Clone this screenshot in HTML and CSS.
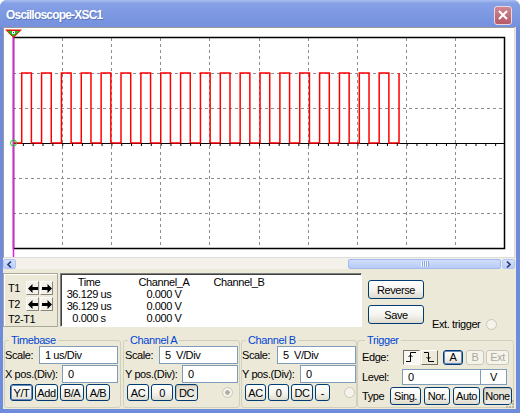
FILE: index.html
```html
<!DOCTYPE html>
<html lang="en">
<head>
  <meta charset="UTF-8">
  <title>Oscilloscope-XSC1</title>
  <link rel="stylesheet" href="styles.css">
</head>
<body>
  <div class="window">
    <div class="titlebar">
      <span class="title">Oscilloscope-XSC1</span>
      <span class="close">
        <svg width="10" height="10" viewBox="0 0 10 10"><path d="M1 1L9 9M9 1L1 9" stroke="#fff" stroke-width="2"/></svg>
      </span>
    </div>

    <div class="client">
      <div class="screen">
        <svg width="510" height="229" viewBox="0 0 510 229">
          <g stroke="#8c8c8c" stroke-dasharray="3 3" fill="none">
            <path d="M58.5 10V220M107.5 10V220M156.5 10V220M205.5 10V220M255.5 10V220M304.5 10V220M353.5 10V220M402.5 10V220M451.5 10V220"/>
            <path d="M9 45.5H501M9 80.5H501M9 150.5H501M9 185.5H501"/>
          </g>
          <path d="M9 115.5H501" stroke="#000"/>
          <path fill="none" stroke="#ff0000" stroke-width="1.5"
            d="M9 115H17.7
               V45h9.7V115h10.16 V45h9.7V115h10.16 V45h9.7V115h10.16 V45h9.7V115h10.16 V45h9.7V115h10.16
               V45h9.7V115h10.16 V45h9.7V115h10.16 V45h9.7V115h10.16 V45h9.7V115h10.16 V45h9.7V115h10.16
               V45h9.7V115h10.16 V45h9.7V115h10.16 V45h9.7V115h10.16 V45h9.7V115h10.16 V45h9.7V115h10.16
               V45h9.7V115h10.16 V45h9.7V115h10.16 V45h9.7V115h10.16 V45h9.7V115h10.16
               V45"/>
          <path d="M9 116.5H501" stroke="#000" stroke-width="3" stroke-dasharray="1 8.84"/>
          <rect x="9.5" y="9.5" width="491" height="211" fill="none" stroke="#000" stroke-width="1.5"/>
          <path d="M9.5 9V229" stroke="#e020e0" stroke-width="1.5"/>
          <circle cx="9.5" cy="115" r="3" fill="none" stroke="#10d010"/>
          <polygon points="1,1.5 18,1.5 9.5,10" fill="#e81010"/>
          <polygon points="3.5,3 15.5,3 9.5,8.5" fill="#10c810"/>
          <rect x="8" y="3" width="3" height="3" fill="#fff"/>
          <rect x="9" y="4" width="1" height="1" fill="#2040d0"/>
        </svg>
      </div>

      <div class="hscroll">
        <span class="sb-btn">
          <svg width="5" height="7" viewBox="0 0 5 7"><path d="M4 0.5L1 3.5L4 6.5" fill="none" stroke="#2c3f73" stroke-width="1.6"/></svg>
        </span>
        <span class="sb-track">
          <span class="sb-thumb">
            <svg width="8" height="6" viewBox="0 0 8 6"><path d="M0.5 0V6M2.5 0V6M4.5 0V6M6.5 0V6" stroke="#eef3ff"/><path d="M1.5 0V6M3.5 0V6M5.5 0V6M7.5 0V6" stroke="#8fa8e0"/></svg>
          </span>
        </span>
        <span class="sb-btn">
          <svg width="5" height="7" viewBox="0 0 5 7"><path d="M1 0.5L4 3.5L1 6.5" fill="none" stroke="#2c3f73" stroke-width="1.6"/></svg>
        </span>
      </div>

      <div class="controls">
        <div class="top-row">
          <div class="cursors">
            <div class="cur-line">
              <span class="cur-name">T1</span>
              <span class="arrow"><svg width="10" height="9" viewBox="0 0 10 9"><path d="M0 4.5L4.5 0V3H10V6H4.5V9Z"/></svg></span>
              <span class="arrow"><svg width="10" height="9" viewBox="0 0 10 9"><path d="M10 4.5L5.5 0V3H0V6H5.5V9Z"/></svg></span>
            </div>
            <div class="cur-line">
              <span class="cur-name">T2</span>
              <span class="arrow"><svg width="10" height="9" viewBox="0 0 10 9"><path d="M0 4.5L4.5 0V3H10V6H4.5V9Z"/></svg></span>
              <span class="arrow"><svg width="10" height="9" viewBox="0 0 10 9"><path d="M10 4.5L5.5 0V3H0V6H5.5V9Z"/></svg></span>
            </div>
            <div class="cur-diff">T2-T1</div>
          </div>

          <div class="readout">
            <span>Time</span><span>Channel_A</span><span>Channel_B</span>
            <span>36.129 us</span><span>0.000 V</span><span></span>
            <span>36.129 us</span><span>0.000 V</span><span></span>
            <span>0.000 s</span><span>0.000 V</span><span></span>
          </div>

          <div class="actions">
            <button class="btn btn-lg">Reverse</button>
            <button class="btn btn-lg">Save</button>
          </div>

          <div class="ext">Ext. trigger <span class="radio"></span></div>
        </div>

        <div class="groups">
          <fieldset class="grp tb">
            <legend>Timebase</legend>
            <div class="row">
              <label class="lbl">Scale:</label>
              <input class="field w79" value="1 us/Div" readonly>
            </div>
            <div class="row">
              <label class="lbl">X pos.(Div):</label>
              <input class="field w56" value="0" readonly>
            </div>
            <div class="row btns">
              <button class="btn def b23">Y/T</button>
              <button class="btn b23">Add</button>
              <button class="btn b24">B/A</button>
              <button class="btn b24">A/B</button>
            </div>
          </fieldset>

          <fieldset class="grp cha">
            <legend>Channel A</legend>
            <div class="row">
              <label class="lbl">Scale:</label>
              <input class="field w79" value="5  V/Div" readonly>
            </div>
            <div class="row">
              <label class="lbl">Y pos.(Div):</label>
              <input class="field w56" value="0" readonly>
            </div>
            <div class="row btns">
              <button class="btn b22">AC</button>
              <button class="btn b22">0</button>
              <button class="btn on b23">DC</button>
              <span class="radio dot"></span>
            </div>
          </fieldset>

          <fieldset class="grp chb">
            <legend>Channel B</legend>
            <div class="row">
              <label class="lbl">Scale:</label>
              <input class="field w79" value="5  V/Div" readonly>
            </div>
            <div class="row">
              <label class="lbl">Y pos.(Div):</label>
              <input class="field w56" value="0" readonly>
            </div>
            <div class="row btns">
              <button class="btn b21">AC</button>
              <button class="btn b21">0</button>
              <button class="btn b22">DC</button>
              <button class="btn b15">-</button>
              <span class="radio"></span>
            </div>
          </fieldset>

          <fieldset class="grp trig">
            <legend>Trigger</legend>
            <div class="row edge-row">
              <label class="lbl-edge">Edge:</label>
              <span class="edge down">
                <svg width="11" height="10" viewBox="0 0 11 10"><path d="M0 9.5H4.5V0.5H10M2.5 5L4.5 3L6.5 5" fill="none" stroke="#000"/></svg>
              </span>
              <span class="edge">
                <svg width="11" height="10" viewBox="0 0 11 10"><path d="M0 0.5H4.5V9.5H10M2.5 5L4.5 7L6.5 5" fill="none" stroke="#000"/></svg>
              </span>
              <button class="btn def src-a">A</button>
              <button class="btn src-b" disabled>B</button>
              <button class="btn src-ext" disabled>Ext</button>
            </div>
            <div class="row level-row">
              <label class="lbl-level">Level:</label>
              <input class="field w79 short" value="0" readonly>
              <span class="unit">V</span>
            </div>
            <div class="row type-row">
              <label class="lbl-type">Type</label>
              <button class="btn b31">Sing.</button>
              <button class="btn b26">Nor.</button>
              <button class="btn b27">Auto</button>
              <button class="btn on b29">None</button>
            </div>
          </fieldset>
        </div>
      </div>

      <svg class="grip" width="8" height="8" viewBox="0 0 8 8">
        <g fill="#b8b5a6"><rect x="6" y="0" width="2" height="2"/><rect x="3" y="3" width="2" height="2"/><rect x="6" y="3" width="2" height="2"/><rect x="0" y="6" width="2" height="2"/><rect x="3" y="6" width="2" height="2"/><rect x="6" y="6" width="2" height="2"/></g>
      </svg>
    </div>
  </div>
</body>
</html>
```

FILE: styles.css
```css
* { box-sizing: border-box; }
body { margin: 0; background: #fff; font-family: "Liberation Sans", Arial, sans-serif; font-size: 11px; letter-spacing: -0.4px; color: #000; }

.window { width: 520px; height: 413px; background: #6f8cdc; border-radius: 7px 7px 0 0; display: flex; flex-direction: column; overflow: hidden; }
.titlebar { height: 27px; flex: none; display: flex; align-items: center; justify-content: space-between; padding: 3px 8px 0 6px; background: linear-gradient(#aac0f1, #87a1e6 3px, #7b97e0 60%, #7591de); color: #fff; }
.title { font-weight: bold; font-size: 12px; letter-spacing: -0.8px; text-shadow: 1px 1px #5d76c0; }
.close { width: 18px; height: 19px; border: 1px solid #ead8de; border-radius: 3px; background: linear-gradient(#cf8793, #b45a69); display: flex; align-items: center; justify-content: center; }

.client { flex: 1; margin: 0 4px 4px 3px; background: #ece9d8; display: flex; flex-direction: column; position: relative; }
.screen { height: 231px; flex: none; margin-right: 1px; border: 1px solid; border-color: #9a9a9a #dcdcdc #dcdcdc #9a9a9a; background: #fff; }
.screen svg { display: block; }

.hscroll { height: 11px; flex: none; display: flex; margin-right: 1px; padding-top: 1px; background: #f3f1ea; }
.sb-btn { width: 13px; height: 10px; border: 1px solid #b1c6f5; border-radius: 2px; background: linear-gradient(#d6e2fe, #b9cdf7); display: flex; align-items: center; justify-content: center; }
.sb-track { flex: 1; display: flex; justify-content: flex-end; padding-right: 1px; }
.sb-thumb { width: 153px; height: 10px; border: 1px solid #a3b9ec; border-radius: 2px; background: linear-gradient(#d0ddfe, #b7cbf8); display: flex; align-items: center; justify-content: center; }

.controls { flex: 1; padding-top: 4px; }
.top-row { display: flex; height: 54px; }

.cursors { width: 55px; border: 1px solid #aca899; box-shadow: inset 1px 1px #fff; padding: 7px 0 0 4px; }
.cur-line { display: flex; align-items: center; height: 14px; margin-bottom: 2px; }
.cur-name { width: 18px; }
.arrow { width: 13px; height: 14px; margin-right: 1px; border: 1px solid; border-color: #fff #8a887c #8a887c #fff; background: #f2f0e8; display: flex; align-items: center; justify-content: center; }
.cur-diff { margin-top: 1px; line-height: 12px; }

.readout { width: 302px; margin-left: 2px; padding-top: 2px; background: #fff; border: 1px solid; border-color: #808080 #fff #fff #808080; box-shadow: inset 1px 1px #404040; display: grid; grid-template-columns: 56px 94px 56px; grid-auto-rows: 12px; align-content: start; text-align: center; line-height: 12px; }

.actions { margin-left: 6px; padding-top: 7px; display: flex; flex-direction: column; gap: 6px; }
.ext { margin-left: 8px; margin-top: 45px; height: 12px; display: flex; align-items: center; gap: 6px; white-space: nowrap; }

.btn { height: 17px; padding: 0; border: 1px solid #003c74; border-radius: 3px; background: linear-gradient(#fff, #f4f3ee 55%, #dedbcd); font: inherit; letter-spacing: inherit; color: #000; }
.btn.def { box-shadow: inset 0 0 0 1px #6d8bbf; }
.btn.on { background: linear-gradient(#e2dfd0, #efede4); box-shadow: inset 1px 1px 1px #c2bfae; }
.btn:disabled { border-color: #c9c7ba; color: #aca899; background: #f5f4ea; }
.btn-lg { width: 56px; height: 19px; }

.radio { width: 11px; height: 11px; border: 1px solid #cac8bb; border-radius: 50%; background: #f4f3ec; display: inline-block; }
.radio.dot { background: radial-gradient(circle, #b0ae9f 0 2px, #f4f3ec 2.5px); }

.groups { display: flex; margin-top: 7px; padding-left: 1px; }
.grp { margin: 0; padding: 0; height: 74px; min-width: 0; border: 1px solid #d0d0bf; border-radius: 3px; }
.grp legend { color: #0046d5; padding: 0 2px; margin-left: 4px; line-height: 12px; }
.tb { width: 117px; margin-right: 2px; }
.cha { width: 117px; margin-right: 1px; }
.chb { width: 116px; }
.trig { width: 157px; }
.trig legend { margin-left: 7px; }

.row { display: flex; align-items: center; height: 18px; }
.row + .row { margin-top: 1px; }
.lbl { flex: 1; white-space: nowrap; }
.tb .row { padding-right: 2px; }
.cha .row { padding: 0 1px; }
.field { height: 18px; padding: 0 0 0 5px; border: 1px solid #7f9db9; background: #fff; font: inherit; letter-spacing: inherit; color: #000; outline: none; }
.w79 { width: 79px; }
.w56 { width: 56px; }

.btns { margin-top: 3px; height: 17px; gap: 2px; }
.tb .btns { padding-left: 5px; }
.cha .btns { padding-left: 3px; }
.chb .btns { padding-left: 3px; }
.cha .radio { margin: 0 5px 0 auto; }
.chb .radio { margin: 0 1px 0 auto; }
.b15 { width: 15px; }
.b21 { width: 21px; }
.b22 { width: 22px; }
.b23 { width: 23px; }
.b24 { width: 24px; }
.b26 { width: 26px; }
.b27 { width: 27px; }
.b29 { width: 29px; }
.b31 { width: 31px; }

.trig .row { padding-left: 4px; }
.edge-row { margin-top: 3px; height: 16px; }
.lbl-edge { width: 41px; }
.edge { width: 17px; height: 15px; margin-right: 1px; border: 1px solid; border-color: #fff #716f64 #716f64 #fff; background: #ece9d8; display: flex; align-items: center; justify-content: center; }
.edge.down { border-color: #716f64 #fff #fff #716f64; background: #f8f7f2; }
.src-a { width: 20px; height: 15px; margin-left: 4px; }
.src-b { width: 18px; height: 15px; margin-left: 3px; }
.src-ext { width: 23px; height: 15px; margin-left: 2px; }

.trig .level-row { margin-top: 4px; height: 16px; }
.lbl-level { width: 40px; }
.field.short { height: 16px; }
.unit { width: 27px; height: 16px; margin-left: -1px; border: 1px solid #7f9db9; background: #fff; text-align: center; line-height: 14px; }

.trig .type-row { margin-top: 2px; gap: 3px; }
.lbl-type { width: 25px; }
.type-row .btn { height: 18px; }

.grip { position: absolute; right: 2px; bottom: 1px; }
```
